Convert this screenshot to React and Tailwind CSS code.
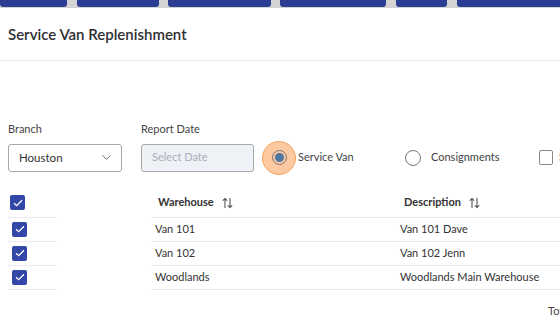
import { ChevronDown } from "lucide-react";

const font = { fontFamily: 'Lato, "Open Sans", sans-serif' };

const Check = ({ className = "" }) => (
    <span className={`flex h-[15px] w-[15px] shrink-0 items-center justify-center rounded-[2px] bg-[#3347a8] ${className}`}>
        <svg width="10" height="8" viewBox="0 0 10 8" fill="none">
            <path d="M1 4.2 L3.7 6.7 L9 1.3" stroke="white" strokeWidth="1.3" />
        </svg>
    </span>
);

const SortIcon = () => (
    <svg width="11" height="12" viewBox="0 0 11 12" fill="none" stroke="#555" strokeWidth="1.1">
        <path d="M3 11 V1.5 M0.8 3.7 L3 1.5 L5.2 3.7" />
        <path d="M8 1 V10.5 M5.8 8.3 L8 10.5 L10.2 8.3" />
    </svg>
);

const rows = [
    ["Van 101", "Van 101 Dave"],
    ["Van 102", "Van 102 Jenn"],
    ["Woodlands", "Woodlands Main Warehouse"],
];

export default function App() {
    return (
        <div className="h-[315px] w-[560px] overflow-hidden whitespace-nowrap bg-white text-[#333]" style={font}>
            {/* Toolbar strip */}
            <div className="flex h-[8px] bg-[#d4d4d4]">
                <div className="h-[7px] w-[67px] shrink-0 rounded-b-[3px] bg-[#2b3e94]" />
                <div className="ml-[10px] h-[7px] w-[82px] shrink-0 rounded-b-[3px] bg-[#2b3e94]" />
                <div className="ml-[9px] h-[7px] w-[103px] shrink-0 rounded-b-[3px] bg-[#2b3e94]" />
                <div className="ml-[9px] h-[7px] w-[106px] shrink-0 rounded-b-[3px] bg-[#2b3e94]" />
                <div className="ml-[10px] h-[7px] w-[51px] shrink-0 rounded-b-[3px] bg-[#2b3e94]" />
                <div className="ml-[10px] h-[7px] flex-1 rounded-bl-[3px] bg-[#2b3e94]" />
            </div>

            {/* Title */}
            <div className="flex h-[53px] items-center border-b border-[#ececec] px-[8px]">
                <h1 className="text-[15px] font-semibold text-[#2e2e33]">Service Van Replenishment</h1>
            </div>

            {/* Filters */}
            <div className="mt-[60px] flex items-end pl-[8px] text-[11px]">
                <div className="flex shrink-0 flex-col">
                    <span className="mb-[6px] text-[#444]">Branch</span>
                    <div className="flex h-[28px] w-[114px] items-center justify-between rounded-[3px] border border-[#a9a9a9] pl-[10px] pr-[7px] text-[11.5px] text-[#333]">
                        Houston
                        <ChevronDown size={15} strokeWidth={1.5} className="text-[#666]" />
                    </div>
                </div>
                <div className="ml-[19px] flex shrink-0 flex-col">
                    <span className="mb-[6px] text-[#444]">Report Date</span>
                    <div className="flex h-[28px] w-[113px] items-center rounded-[3px] border border-[#a9a9a9] bg-[#eef1f5] pl-[10px] text-[11px] text-[#a8adb8]">
                        Select Date
                    </div>
                </div>
                <div className="ml-[8px] flex h-[28px] shrink-0 items-center">
                    <span className="flex h-[34px] w-[34px] shrink-0 items-center justify-center rounded-full border border-[#f6a35e] bg-[#fdc9a1]">
                        <span className="flex h-[15px] w-[15px] items-center justify-center rounded-full border border-[#777]">
                            <span className="h-[9px] w-[9px] rounded-full bg-[#4b77a0]" />
                        </span>
                    </span>
                    <span className="ml-[2px] w-[107px] text-[#444]">Service Van</span>
                    <span className="h-[16px] w-[16px] shrink-0 rounded-full border border-[#777]" />
                    <span className="ml-[10px] w-[108px] text-[#444]">Consignments</span>
                    <span className="h-[15px] w-[14px] shrink-0 rounded-[2px] border border-[#888]" />
                    <span className="ml-[6px] text-[#444]">Stock</span>
                </div>
            </div>

            {/* Table */}
            <div className="mt-[17px] flex text-[11px]">
                <div className="ml-[8px] w-[49px] shrink-0">
                    <div className="flex h-[29px] items-center border-b border-[#ececec] pl-[2px]">
                        <Check />
                    </div>
                    {rows.map(r => (
                        <div key={r[0]} className="flex h-[24px] items-center border-b border-[#ececec] pl-[4px]">
                            <Check />
                        </div>
                    ))}
                </div>
                <div className="ml-[94px] min-w-0 flex-1">
                    <div className="flex h-[29px] items-center border-b border-[#ececec] font-bold text-[#333]">
                        <div className="flex w-[249px] shrink-0 items-center pl-[7px]">
                            Warehouse <span className="ml-[8px]"><SortIcon /></span>
                        </div>
                        <div className="flex items-center pl-[4px]">
                            Description <span className="ml-[8px]"><SortIcon /></span>
                        </div>
                    </div>
                    {rows.map(r => (
                        <div key={r[0]} className="flex h-[24px] items-center border-b border-[#ececec] text-[#333]">
                            <div className="w-[249px] shrink-0 pl-[4px]">{r[0]}</div>
                            <div>{r[1]}</div>
                        </div>
                    ))}
                    <div className="mt-[13px] pl-[397px] text-[#444]">Total</div>
                </div>
            </div>
        </div>
    );
}
